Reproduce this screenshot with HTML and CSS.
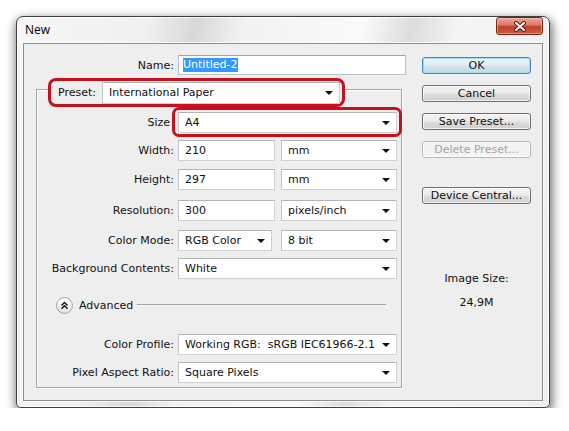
FILE: index.html
```html
<!DOCTYPE html>
<html>
<head>
<meta charset="utf-8">
<title>New</title>
<link rel="stylesheet" href="styles.css">
</head>
<body>
<div class="window">
  <div class="titlebar">
    <span class="title">New</span>
    <div class="close">
      <svg width="16" height="11" viewBox="0 0 16 11"><path d="M4 2 L12 9 M12 2 L4 9" stroke="#5a1c12" stroke-width="4" stroke-linecap="round"/><path d="M4 2 L12 9 M12 2 L4 9" stroke="#ffffff" stroke-width="2" stroke-linecap="round"/></svg>
    </div>
  </div>
  <div class="client">
    <div class="form">
      <div class="row name-row">
        <span class="lbl">Name:</span>
        <div class="field name-field ctl"><span class="sel">Untitled-2</span></div>
      </div>
      <div class="group">
        <div class="preset-box">
          <span class="preset-lbl">Preset:</span>
          <div class="dropdown preset-dd"><span>International Paper</span><i class="arrow"></i></div>
        </div>
        <div class="row size-row">
          <span class="lbl">Size</span>
          <div class="size-box"><div class="dropdown w-full"><span>A4</span><i class="arrow"></i></div></div>
        </div>
        <div class="row r-width">
          <span class="lbl">Width:</span>
          <div class="field num ctl">210</div>
          <div class="dropdown unit"><span>mm</span><i class="arrow"></i></div>
        </div>
        <div class="row r-height">
          <span class="lbl">Height:</span>
          <div class="field num ctl">297</div>
          <div class="dropdown unit"><span>mm</span><i class="arrow"></i></div>
        </div>
        <div class="row r-res">
          <span class="lbl">Resolution:</span>
          <div class="field num ctl">300</div>
          <div class="dropdown unit"><span>pixels/inch</span><i class="arrow"></i></div>
        </div>
        <div class="row r-mode">
          <span class="lbl">Color Mode:</span>
          <div class="dropdown mode ctl"><span>RGB Color</span><i class="arrow"></i></div>
          <div class="dropdown unit bits"><span>8 bit</span><i class="arrow"></i></div>
        </div>
        <div class="row r-bg">
          <span class="lbl">Background Contents:</span>
          <div class="dropdown w-full ctl"><span>White</span><i class="arrow"></i></div>
        </div>
        <div class="advanced">
          <span class="adv-btn"><svg width="9" height="9" viewBox="0 0 9 9"><path d="M1.5 4.5 L4.5 1.5 L7.5 4.5 M1.5 7.8 L4.5 4.8 L7.5 7.8" fill="none" stroke="#111" stroke-width="1.4"/></svg></span>
          <span class="adv-text">Advanced</span>
          <span class="adv-line"></span>
        </div>
        <div class="row r-profile">
          <span class="lbl">Color Profile:</span>
          <div class="dropdown w-full ctl"><span>Working RGB:&nbsp; sRGB IEC61966-2.1</span><i class="arrow"></i></div>
        </div>
        <div class="row r-pixel">
          <span class="lbl">Pixel Aspect Ratio:</span>
          <div class="dropdown w-full ctl"><span>Square Pixels</span><i class="arrow"></i></div>
        </div>
      </div>
    </div>
    <div class="side">
      <div class="btn btn-ok">OK</div>
      <div class="btn">Cancel</div>
      <div class="btn">Save Preset...</div>
      <div class="btn btn-disabled">Delete Preset...</div>
      <div class="btn btn-device">Device Central...</div>
      <div class="info">Image Size:</div>
      <div class="info info-val">24,9M</div>
    </div>
  </div>
</div>
</body>
</html>
```

FILE: styles.css
```css
body {
  margin: 0;
  background: #ffffff;
  font-family: "DejaVu Sans", sans-serif;
  font-size: 11px;
  color: #111111;
}

.window {
  margin: 16px 0 0 16px;
  width: 534px;
  height: 392px;
  box-sizing: border-box;
  border: 1px solid #3e3e3e;
  border-radius: 7px 7px 5px 5px;
  padding: 0 6px 6px;
  display: flex;
  flex-direction: column;
  background:
    linear-gradient(100deg, #f6f6f6 0%, #f0f0f0 22%, #d8d8d8 30%, #f2f2f2 38%, #fafafa 58%, #dcdcdc 66%, #f5f5f5 74%, #eeeeee 100%);
  box-shadow: 1px 4px 10px 2px rgba(0, 0, 0, 0.5), inset 0 0 0 1px rgba(255, 255, 255, 0.8);
}

.titlebar {
  height: 26px;
  display: flex;
  justify-content: space-between;
  align-items: flex-start;
  flex-shrink: 0;
}

.title {
  font-family: "Open Sans", "DejaVu Sans", sans-serif;
  font-size: 12px;
  line-height: 26px;
  padding-left: 2px;
  color: #000;
}

.close {
  width: 47px;
  height: 18px;
  box-sizing: border-box;
  border: 1px solid #7a2418;
  border-radius: 3px;
  background: linear-gradient(#e8a597 0%, #dc7f6c 40%, #c5402a 55%, #cc5a44 100%);
  display: flex;
  align-items: center;
  justify-content: center;
  box-shadow: inset 0 0 0 1px rgba(255, 210, 200, 0.45);
}

.client {
  flex: 1;
  border: 1px solid #8e8e8e;
  background: #eeeeee;
  display: flex;
  padding-top: 11px;
  box-sizing: border-box;
  min-height: 0;
  box-shadow: 0 0 0 1px rgba(255, 255, 255, 0.7);
}

.form {
  width: 382px;
  flex-shrink: 0;
}

.row {
  display: flex;
  align-items: center;
  height: 21px;
}

.lbl {
  width: 137px;
  flex-shrink: 0;
  text-align: right;
  white-space: nowrap;
  box-sizing: border-box;
}

.name-row {
  height: 20px;
}

.name-row .lbl {
  width: 150px;
}

.ctl {
  margin-left: 4px;
}

.field,
.dropdown {
  background: #ffffff;
  border: 1px solid #d0d0d0;
  border-top-color: #b4b4b4;
  border-left-color: #c4c4c4;
  box-sizing: border-box;
  height: 21px;
  display: flex;
  align-items: center;
  padding-left: 6px;
  white-space: nowrap;
  flex-shrink: 0;
}

.name-field {
  width: 228px;
  height: 20px;
  padding-left: 4px;
  border-color: #b8c2cc;
  border-top-color: #9aa4ae;
}

.sel {
  display: inline-block;
  background: #3399ff;
  color: #ffffff;
  line-height: 14px;
  padding: 0 1px 0 0;
}

.arrow {
  margin-left: auto;
  margin-right: 6px;
  width: 0;
  height: 0;
  border-left: 4px solid transparent;
  border-right: 4px solid transparent;
  border-top: 4px solid #111;
}

.group {
  margin: 14px 0 0 12px;
  width: 366px;
  box-sizing: border-box;
  border: 1px solid #a6a6a6;
  padding: 0 3px 4px 0;
  box-shadow: inset 1px 1px 0 #fbfbfb, 1px 1px 0 #fbfbfb;
}

.preset-box {
  margin: -12px 0 0 11px;
  width: 297px;
  height: 29px;
  box-sizing: border-box;
  border: 3px solid #c8101c;
  border-radius: 8px;
  background: #eeeeee;
  display: flex;
  align-items: center;
  padding: 0 2px 0 7px;
}

.preset-dd {
  margin-left: auto;
  width: 238px;
  height: 22px;
}

.size-row {
  height: auto;
}

.size-row .lbl {
  padding-right: 4px;
}

.size-box {
  margin-left: -2px;
  border: 3px solid #c8101c;
  border-radius: 7px;
  padding: 2px 2px 1px 3px;
  flex-shrink: 0;
}

.w-full {
  width: 219px;
}

.num {
  width: 97px;
}

.unit {
  width: 116px;
  margin-left: 6px;
}

.mode {
  width: 94px;
}

.bits {
  margin-left: 9px;
}

.r-width {
  margin-top: 3px;
}

.r-height {
  margin-top: 8px;
}

.r-res {
  margin-top: 10px;
}

.r-mode {
  margin-top: 9px;
}

.r-bg {
  margin-top: 7px;
}

.advanced {
  display: flex;
  align-items: center;
  height: 20px;
  margin-top: 16px;
  padding-left: 19px;
}

.adv-btn {
  width: 17px;
  height: 17px;
  box-sizing: border-box;
  border-radius: 50%;
  border: 1px solid #a4a4a4;
  background: linear-gradient(#ffffff, #e2e2e2);
  display: flex;
  align-items: center;
  justify-content: center;
  flex-shrink: 0;
}

.adv-text {
  margin-left: 6px;
}

.adv-line {
  flex: 1;
  height: 0;
  border-top: 1px solid #a0a0a0;
  border-bottom: 1px solid #fbfbfb;
  margin: 0 12px 0 4px;
}

.r-profile {
  margin-top: 19px;
}

.r-pixel {
  margin-top: 7px;
}

.side {
  margin-left: 16px;
  margin-top: 2px;
  width: 109px;
  display: flex;
  flex-direction: column;
}

.btn {
  height: 17px;
  box-sizing: border-box;
  border: 1px solid #707070;
  border-radius: 3px;
  background: linear-gradient(#f3f3f3 0%, #ebebeb 48%, #dddddd 52%, #cfcfcf 100%);
  text-align: center;
  line-height: 15px;
  color: #111;
  box-shadow: inset 0 0 0 1px rgba(255, 255, 255, 0.7);
}

.btn + .btn {
  margin-top: 11px;
}

.btn-ok {
  border-color: #3c8cc4;
  background: linear-gradient(#eef5f9 0%, #e2edf3 48%, #d3e2ea 52%, #c6d9e4 100%);
  box-shadow: inset 0 0 0 1px #9fdcf6;
}

.btn-disabled {
  color: #a3a3a3;
  border-color: #b8b8b8;
  background: #f3f3f3;
}

.btn + .btn-device {
  margin-top: 29px;
}

.info {
  margin-top: 68px;
  text-align: center;
  line-height: 14px;
}

.info-val {
  margin-top: 10px;
}
```
